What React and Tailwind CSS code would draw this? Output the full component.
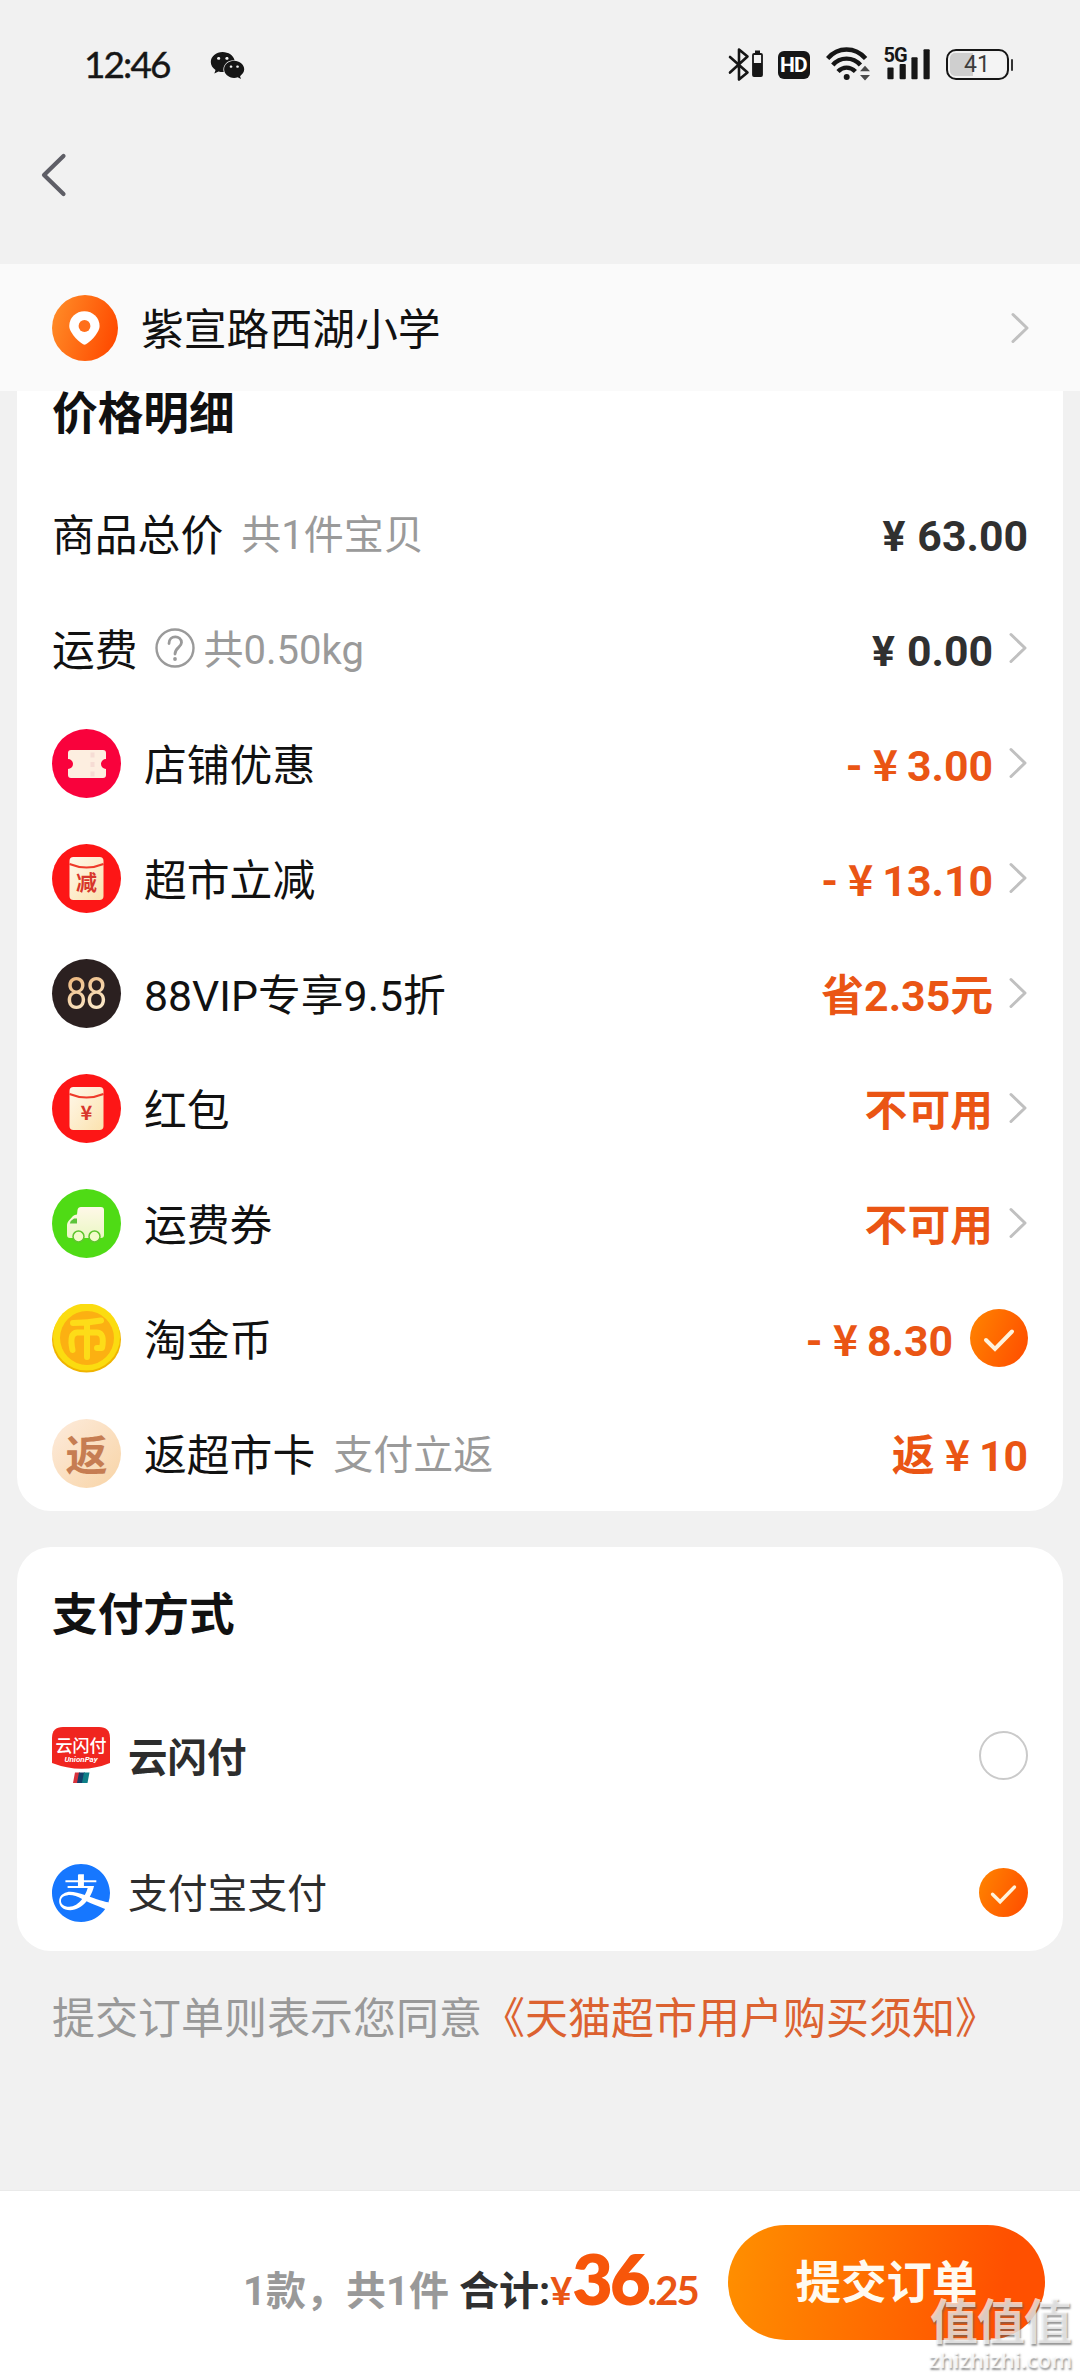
import React from "react";
import { FaWeixin } from "react-icons/fa";

const CJK = "font-['Roboto','Noto_Sans_CJK_SC',sans-serif]";

function StatusBar() {
  return (
    <div className="flex h-[116px] items-start pl-[84px] pr-[67px] text-[#161616]">
      <div className="mt-[42px] w-[126px] font-['Lato',sans-serif] text-[37px] leading-[44px] font-normal tracking-[-1.9px] [-webkit-text-stroke:0.4px_#161616]">
        12:46
      </div>
      <FaWeixin className="mt-[49px] h-[33px] w-[35px]" />
      <div className="ml-auto flex items-start">
        <svg className="mt-[46px] h-[36px] w-[36px]" viewBox="0 0 36 36" fill="none">
          <path d="M2 11 L19.5 26.5 L11 33.5 V3.5 L19.5 10.5 L2 26.5" stroke="#161616" strokeWidth="2.6" strokeLinejoin="round" strokeLinecap="round" />
          <rect x="27" y="4.5" width="5" height="3" fill="#161616" />
          <rect x="25" y="8" width="9" height="22" rx="1" stroke="#161616" strokeWidth="1.8" />
          <rect x="25" y="17" width="9" height="13" fill="#161616" />
        </svg>
        <div className="mt-[51px] ml-[14px] flex h-7 w-8 items-center justify-center rounded-[6px] bg-[#161616] font-['Roboto',sans-serif] text-[21px] leading-none font-bold tracking-[-0.8px] text-white">
          HD
        </div>
        <svg className="mt-[45px] ml-[16px] h-[36px] w-[46px]" viewBox="0 0 46 36" fill="none">
          <g stroke="#161616" strokeWidth="4.4">
            <path d="M1.6 13.5 C12 1.5 29 1.5 39.6 13.5" />
            <path d="M6.8 20 C14 11.5 27 11.5 34.4 20" />
            <path d="M12 26.5 C17 21.3 24 21.3 29.4 26.5" />
          </g>
          <circle cx="20.7" cy="32" r="3" fill="#161616" />
          <path d="M34 26.3 L39 20.8 L44 26.3 Z M34 30 L39 35.5 L44 30 Z" fill="#4a4a4a" />
        </svg>
        <div className="mt-[46px] ml-[12px] h-[34px] w-[48px]">
          <div className="h-[16px] font-['Roboto',sans-serif] text-[20px] leading-[18px] font-bold tracking-[-1px]">5G</div>
          <svg className="-mt-[13px] h-[31px] w-[48px]" viewBox="0 0 48 31" fill="#161616">
            <rect x="3.4" y="18.5" width="6.2" height="11.7" rx="1" />
            <rect x="15.6" y="15" width="6.2" height="15.2" rx="1" />
            <rect x="27.4" y="8.2" width="6.2" height="22" rx="1" />
            <rect x="39.5" y="0.2" width="6.2" height="30" rx="1" />
          </svg>
        </div>
        <div className="mt-[49px] ml-[14px] flex items-center">
          <div className="flex h-[31px] w-[63px] rounded-[10px] border-[2.5px] border-[#161616] p-[2px]">
            <div className="flex w-full items-center justify-center rounded-[5px] bg-[linear-gradient(90deg,#cfcfcf_41%,#f4f4f4_41%)] font-['Roboto',sans-serif] text-[23px] leading-none text-[#3c3c3c]">
              41
            </div>
          </div>
          <div className="ml-[2px] h-3 w-[2.5px] rounded bg-[#333]" />
        </div>
      </div>
    </div>
  );
}

function Chevron({ className = "" }) {
  return (
    <svg className={`h-[32px] w-[20px] shrink-0 ${className}`} viewBox="0 0 20 32" fill="none">
      <path d="M3 2.5 L17 16 L3 29.5" stroke="#c0c0c0" strokeWidth="3" strokeLinecap="round" strokeLinejoin="round" />
    </svg>
  );
}

function Check({ className }) {
  return (
    <svg className={`shrink-0 ${className}`} viewBox="0 0 58 58">
      <defs>
        <linearGradient id="check" x1="0" y1="0.3" x2="1" y2="0.7">
          <stop offset="0" stopColor="#ff8000" />
          <stop offset="1" stopColor="#ff5000" />
        </linearGradient>
      </defs>
      <circle cx="29" cy="29" r="29" fill="url(#check)" />
      <path d="M16 31 L25 40 L42 22.5" fill="none" stroke="#fff3dc" strokeWidth="4" strokeLinecap="round" strokeLinejoin="miter" />
    </svg>
  );
}

const ICON = "h-[69px] w-[69px] shrink-0";

function CouponIcon() {
  return (
    <svg className={ICON} viewBox="0 0 69 69">
      <circle cx="34.5" cy="34.5" r="34.5" fill="#f9023c" />
      <path d="M19 21 H51 Q54 21 54 24 V30 A5 5 0 0 0 54 40 V46 Q54 49 51 49 H19 Q16 49 16 46 V40 A5 5 0 0 0 16 30 V24 Q16 21 19 21 Z" fill="#fdeee0" />
      <path d="M40.5 23.5 V48" stroke="#f6dcd4" strokeWidth="4" strokeDasharray="5 4.5" />
    </svg>
  );
}

function EnvelopeIcon({ id, children, size }) {
  return (
    <svg className={ICON} viewBox="0 0 69 69">
      <defs>
        <linearGradient id={id} x1="0" y1="0" x2="1" y2="1">
          <stop offset="0" stopColor="#fff8ea" />
          <stop offset="1" stopColor="#fbe2ae" />
        </linearGradient>
      </defs>
      <circle cx="34.5" cy="34.5" r="34.5" fill="#fd1616" />
      <rect x="17.5" y="13" width="34" height="43" rx="4" fill={`url(#${id})`} />
      <path d="M17.5 20 Q34.5 27 51.5 20" fill="none" stroke="#ee3a2a" strokeWidth="2" />
      <text x="34.5" y="46" textAnchor="middle" fontSize={size} fontWeight="700" fill="#d8362c" fontFamily="'Noto Sans CJK SC', sans-serif">
        {children}
      </text>
    </svg>
  );
}

function VipIcon() {
  return (
    <div className={`${ICON} flex items-center justify-center rounded-full bg-[#2b2020]`}>
      <span className="scale-x-[0.86] bg-[linear-gradient(160deg,#e8ad70,#fbe6c4_75%)] bg-clip-text pr-[2px] font-['Roboto',sans-serif] text-[45px] leading-[45px] font-normal tracking-[-2px] text-transparent">
        88
      </span>
    </div>
  );
}

function TruckIcon() {
  return (
    <svg className={ICON} viewBox="0 0 69 69">
      <defs>
        <linearGradient id="truck" x1="0" y1="0" x2="0" y2="1">
          <stop offset="0" stopColor="#fff8e8" />
          <stop offset="1" stopColor="#eaf8c4" />
        </linearGradient>
      </defs>
      <circle cx="34.5" cy="34.5" r="34.5" fill="#4fdb15" />
      <path d="M29 18 H49 Q52 18 52 21 V46 Q52 49 49 49 H18 Q15 49 15 46 V36 Q15 34 16.5 32 L21 27 Q22.500 25.500 25 25.500 L25.500 21 Q26 18 29 18 Z" fill="url(#truck)" />
      <path d="M25 29.500 V34.500 H17.800 Q19 31 22 29.500 Z" fill="#5cc43a" />
      <circle cx="26.500" cy="47.500" r="5.500" fill="#f2fbca" stroke="#5fc52e" strokeWidth="1.500" />
      <circle cx="42.500" cy="47.500" r="5.500" fill="#f2fbca" stroke="#5fc52e" strokeWidth="1.500" />
    </svg>
  );
}

function CoinIcon() {
  return (
    <svg className={ICON} viewBox="0 0 69 69">
      <ellipse cx="34.500" cy="35.500" rx="34.500" ry="33" fill="#f0b400" />
      <circle cx="34.500" cy="33" r="33.500" fill="#fbdc10" />
      <circle cx="35" cy="34" r="27" fill="#fcb012" />
      <path d="M21 19 Q36 19 49 16.500 M35 19 V53 M20.500 46 Q17 29 25 28.500 H45 Q53 29 50 44 L45 44" fill="none" stroke="#fddc18" strokeWidth="6" strokeLinecap="round" strokeLinejoin="round" />
    </svg>
  );
}

function ReturnIcon() {
  return (
    <div className={`${ICON} flex items-center justify-center rounded-full bg-[linear-gradient(135deg,#fdebdc,#f8d4a6)]`}>
      <span className="font-['Noto_Sans_CJK_SC',sans-serif] text-[42px] leading-[42px] font-bold text-[#c67d52]">返</span>
    </div>
  );
}

function UnionPayIcon() {
  return (
    <svg className="h-[58px] w-[58px] shrink-0" viewBox="0 0 58 58">
      <path d="M11 1 H47 Q58 1 58 12 V37 Q30 48.500 0 37 V12 Q0 1 11 1 Z" fill="#f0251f" />
      <text x="29" y="26" textAnchor="middle" fontSize="17" fontWeight="500" fill="#fff" fontFamily="'Noto Sans CJK SC', sans-serif">云闪付</text>
      <text x="29" y="36" textAnchor="middle" fontSize="8" fontStyle="italic" fontWeight="700" fill="#fff" fontFamily="Roboto, sans-serif">UnionPay</text>
      <path d="M23 46.500 H28 L26 57 H21 Z" fill="#d8323c" />
      <path d="M27 46.500 H33 L31 57 H25 Z" fill="#12406b" />
      <path d="M32 46.500 H37.500 L35.500 57 H30 Z" fill="#0e7f88" />
    </svg>
  );
}

function AlipayIcon() {
  return (
    <svg className="h-[58px] w-[58px] shrink-0" viewBox="64 64 896 896" fill="#1677ff">
      <path d="M308.600 545.700c-19.800 2-57.100 10.700-77.400 28.600-61 53-24.500 150 99 150 71.800 0 143.500-45.700 199.800-119-80.200-38.900-148.100-66.800-221.400-59.600zm460.500 67c100.100 33.400 154.700 43 166.700 44.800A445.900 445.900 0 00960 512c0-247.400-200.600-448-448-448S64 264.600 64 512s200.600 448 448 448c155.900 0 293.200-79.700 373.500-200.500-75.600-29.800-213.600-85-286.800-120.100-69.900 85.700-160.100 137.800-253.700 137.800-158.400 0-212.100-138.100-137.200-229 16.300-19.800 44.200-38.700 87.300-49.400 67.500-16.500 175 10.300 275.700 43.400 18.100-33.300 33.400-69.900 44.700-108.900H305.100V402h160v-56.200H271.300v-31.300h193.800v-80.100s0-13.500 13.700-13.500H557v93.600h191.700v31.300H557.100V402h156.400c-15 61.100-37.700 117.400-66.200 166.800 47.500 17.100 90.100 33.300 121.800 43.900z" />
    </svg>
  );
}

function Amount({ prefix, value }) {
  return (
    <span className="flex items-baseline">
      {prefix ? (
        <>
          <span>{prefix}</span>
          <span className="mr-[9px] ml-[10px] font-['Noto_Sans_CJK_SC',sans-serif] leading-[40px]">¥</span>
        </>
      ) : (
        <span className="mr-[12px]">¥</span>
      )}
      <span>{value}</span>
    </span>
  );
}

const rows = [
  { label: "商品总价", note: "共1件宝贝", dark: true, amount: <Amount value="63.00" /> },
  { label: "运费", help: true, note: "共0.50kg", dark: true, amount: <Amount value="0.00" />, arrow: true },
  { icon: <CouponIcon />, label: "店铺优惠", amount: <Amount prefix="-" value="3.00" />, arrow: true },
  { icon: <EnvelopeIcon id="env1" size="21">减</EnvelopeIcon>, label: "超市立减", amount: <Amount prefix="-" value="13.10" />, arrow: true },
  { icon: <VipIcon />, label: "88VIP专享9.5折", amount: "省2.35元", arrow: true },
  { icon: <EnvelopeIcon id="env2" size="20">¥</EnvelopeIcon>, label: "红包", amount: "不可用", arrow: true },
  { icon: <TruckIcon />, label: "运费券", amount: "不可用", arrow: true },
  { icon: <CoinIcon />, label: "淘金币", amount: <Amount prefix="-" value="8.30" />, check: true },
  { icon: <ReturnIcon />, label: "返超市卡", note: "支付立返", amount: <Amount prefix="返" value="10" /> },
];

function PriceRow({ row }) {
  return (
    <div className="flex h-[115px] items-center">
      {row.icon && <div className="mr-[23px]">{row.icon}</div>}
      <span className="pt-[5px] text-[42.800px] leading-[60px] whitespace-nowrap text-[#111]">{row.label}</span>
      {row.help && (
        <svg className="ml-[17px] h-[40px] w-[40px]" viewBox="0 0 40 40" fill="none" stroke="#9a9a9a">
          <circle cx="20" cy="20" r="18.500" strokeWidth="2.400" />
          <path d="M14 15.500 C14 6.500 26.500 7 26.500 14.500 C26.500 19.500 20 19.500 20 26" strokeWidth="2.800" strokeLinecap="round" />
          <circle cx="20" cy="31" r="1.900" fill="#9a9a9a" stroke="none" />
        </svg>
      )}
      {row.note && (
        <span className={`pt-[6px] text-[40px] leading-[60px] whitespace-nowrap text-[#9a9a9a] ${row.help ? "ml-[9px]" : "ml-[18px]"}`}>
          {row.note}
        </span>
      )}
      <span className={`ml-auto pt-[5px] text-[42.800px] leading-[60px] font-bold whitespace-nowrap ${row.dark ? "text-[#303030]" : "text-[#ea5514]"}`}>
        {row.amount}
      </span>
      {row.arrow && <Chevron className="ml-[15px]" />}
      {row.check && <Check className="ml-[17px] h-[58px] w-[58px]" />}
    </div>
  );
}

export default function App() {
  return (
    <div className={`flex h-[2376px] w-[1080px] flex-col overflow-hidden bg-[#f1f1f1] ${CJK}`}>
      <StatusBar />
      <div className="flex h-[148px] items-start pt-[37px] pl-[39px]">
        <svg className="h-[44px] w-[28px]" viewBox="0 0 28 44" fill="none">
          <path d="M24.500 3 L5 22 L24.500 41" stroke="#5e5e66" strokeWidth="4.200" strokeLinecap="round" strokeLinejoin="round" />
        </svg>
      </div>

      <div className="flex h-[127px] shrink-0 items-center bg-[#fafafa] pr-[50px] pl-[52px]">
        <svg className="h-[66px] w-[66px]" viewBox="0 0 67 67">
          <defs>
            <linearGradient id="pin" x1="0" y1="0.300" x2="1" y2="0.600">
              <stop offset="0" stopColor="#ff8a26" />
              <stop offset="1" stopColor="#ff4a00" />
            </linearGradient>
          </defs>
          <circle cx="33.500" cy="33.500" r="33.500" fill="url(#pin)" />
          <path d="M33 50.500 C30 50.500 17.500 39 17.500 31.500 A15.300 15 0 0 1 48.300 31.500 C48.300 39 36 50.500 33 50.500 Z" fill="#fff" />
          <circle cx="33" cy="31.500" r="6" fill="#ff6f1a" />
        </svg>
        <span className="ml-[23px] pt-[5px] text-[42.800px] leading-[60px] text-[#111]">紫宣路西湖小学</span>
        <Chevron className="ml-auto" />
      </div>

      <section className="mx-[17px] h-[1120px] shrink-0 rounded-b-[34px] bg-white px-[35px] pt-[1px]">
        <h2 className="h-[83.500px] text-[45.700px] leading-[46px] font-bold text-[#111]">价格明细</h2>
        {rows.map((row) => (
          <PriceRow key={row.label} row={row} />
        ))}
      </section>

      <section className="mx-[17px] mt-[36px] h-[404px] shrink-0 rounded-[34px] bg-white px-[35px]">
        <h2 className="h-[139px] pt-[39px] text-[45.700px] leading-[60px] font-bold text-[#111]">支付方式</h2>
        <div className="flex h-[138px] items-center">
          <UnionPayIcon />
          <span className="ml-[18px] pt-[8px] text-[39.500px] leading-[60px] font-bold text-[#2d2d2d]">云闪付</span>
          <span className="ml-auto h-[49px] w-[49px] rounded-full border-[2.500px] border-[#cacaca]" />
        </div>
        <div className="flex h-[137px] items-center">
          <AlipayIcon />
          <span className="ml-[18px] pt-[4px] text-[39.800px] leading-[60px] text-[#2d2d2d]">支付宝支付</span>
          <Check className="ml-auto h-[49px] w-[49px]" />
        </div>
      </section>

      <p className="mt-[38px] pl-[52px] text-[43px] leading-[60px] whitespace-nowrap text-[#999]">
        提交订单则表示您同意<span className="text-[#dc6230]">《天猫超市用户购买须知》</span>
      </p>

      <footer className="relative mt-auto flex h-[186px] shrink-0 items-start border-t border-[#eaeaea] bg-white pt-[34px] pr-[35px]">
        <div className="ml-auto flex items-baseline pt-[23px] text-[40px] leading-[60px] font-bold whitespace-nowrap text-[#999]">
          <span>1款，共1件</span>
          <span className="ml-[10px] text-[#303030]">合计:</span>
          <span className="flex items-baseline font-['Lato',sans-serif] text-[#ea5514]">
            <span className="text-[38px]">¥</span>
            <span className="text-[70px] font-extrabold tracking-[-3px] text-[#f7560a]">36</span>
            <span className="text-[40px] tracking-[-1.800px]">.25</span>
          </span>
        </div>
        <button className="ml-[30px] h-[115px] w-[317px] rounded-full bg-[linear-gradient(100deg,#ff9000,#ff5000_85%)] pt-[2px] text-[45.500px] leading-[113px] font-bold text-[#fffaf0]">
          提交订单
        </button>
        <div className="absolute right-[9px] bottom-[4px] flex w-[141px] flex-col items-center whitespace-nowrap text-white/70 [text-shadow:1px_2px_2px_rgba(90,90,90,0.65)]">
          <span className="text-[48px] leading-[48px] font-bold tracking-[-1px]">值值值</span>
          <span className="font-['Open_Sans',sans-serif] text-[22px] leading-[25px] font-semibold text-white/80">zhizhizhi.com</span>
        </div>
      </footer>
    </div>
  );
}
